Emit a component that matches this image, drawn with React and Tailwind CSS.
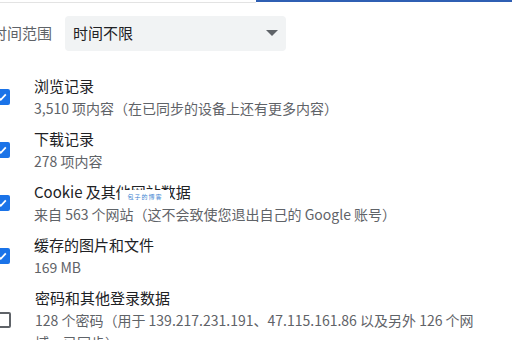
import React from "react";

const items = [
  { title: "浏览记录", sub: "3,510 项内容（在已同步的设备上还有更多内容）", checked: true },
  { title: "下载记录", sub: "278 项内容", checked: true },
  { title: "Cookie 及其他网站数据", sub: "来自 563 个网站（这不会致使您退出自己的 Google 账号）", checked: true, mark: true },
  { title: "缓存的图片和文件", sub: "169 MB", checked: true },
  {
    title: "密码和其他登录数据",
    sub: "128 个密码（用于 139.217.231.191、47.115.161.86 以及另外 126 个网域，已同步）",
    checked: false,
  },
];

const CheckBox = ({ checked }) =>
  checked ? (
    <div className="w-4 h-4 -ml-[6px] shrink-0 rounded-[2px] bg-[#1a73e8] flex items-center justify-center">
      <svg width="12" height="12" viewBox="0 0 12 12">
        <path d="M2.2 6.3 L4.8 8.8 L9.8 3.4" fill="none" stroke="#fff" strokeWidth="1.8" />
      </svg>
    </div>
  ) : (
    <div className="w-4 h-4 -ml-[5px] shrink-0 rounded-[2px] border-2 border-[#5f6368]" />
  );

export default function App() {
  return (
    <div className="w-[512px] h-[340px] overflow-hidden bg-white font-['Noto_Sans_CJK_SC',sans-serif] text-[#202124]">
      {/* tab underline */}
      <div className="flex">
        <div className="flex-1 h-[3px] border-b border-[#e3e3e3]" />
        <div className="w-[256px] h-[2px] bg-[#2f5fb3]" />
      </div>

      {/* time range */}
      <div className="flex items-center mt-[13px] -ml-[8px]">
        <span className="text-[15px] text-[#5f6368] w-[73px] shrink-0">时间范围</span>
        <div className="w-[221px] h-[35px] rounded bg-[#f1f3f4] flex items-center justify-between pl-2 pr-2">
          <span className="text-[15px]">时间不限</span>
          <svg width="12" height="7" viewBox="0 0 12 7">
            <path d="M0 0 L12 0 L6 6 Z" fill="#5f6368" />
          </svg>
        </div>
      </div>

      {/* items */}
      <div className="mt-[24px] flex flex-col gap-[9px]">
        {items.map((it) => (
          <div key={it.title} className="flex items-center gap-[24px]">
            <CheckBox checked={it.checked} />
            <div className="w-[452px]">
              <div className="relative text-[15px] leading-[22px]">
                {it.title}
                {it.mark && (
                  <span className="absolute left-[86px] top-[9px] w-[50px] h-[14px] bg-white text-[6px] leading-[14px] text-[#3b7fd1] text-center tracking-[1px]">
                    包子的博客
                  </span>
                )}
              </div>
              <div className="text-[14px] leading-[22px] text-[#5f6368]">{it.sub}</div>
            </div>
          </div>
        ))}
      </div>
    </div>
  );
}
